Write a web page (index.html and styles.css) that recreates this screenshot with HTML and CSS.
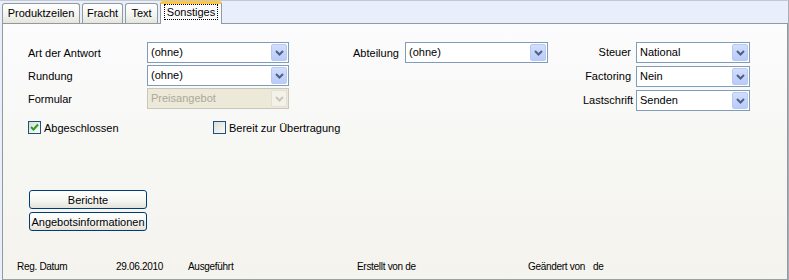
FILE: index.html
```html
<!DOCTYPE html>
<html lang="de">
<head>
  <meta charset="UTF-8">
  <title>Angebot - Sonstiges</title>
  <link rel="stylesheet" href="styles.css">
</head>
<body>

<div class="window">

  <!-- Tab strip -->
  <div class="tabs">
    <div class="tab tab-w1">Produktzeilen</div>
    <div class="tab tab-w2">Fracht</div>
    <div class="tab tab-w3">Text</div>
    <div class="tab tab-active"><span class="focus">Sonstiges</span></div>
  </div>

  <!-- Tab page -->
  <div class="panel">

    <div class="fields">
      <div class="group group-left">
        <label>Art der Antwort</label>
        <div class="combo"><span>(ohne)</span><i class="drop"><svg width="9" height="6" viewBox="0 0 9 6"><polyline points="1,1 4.5,4.5 8,1"/></svg></i></div>
        <label>Rundung</label>
        <div class="combo"><span>(ohne)</span><i class="drop"><svg width="9" height="6" viewBox="0 0 9 6"><polyline points="1,1 4.5,4.5 8,1"/></svg></i></div>
        <label>Formular</label>
        <div class="combo disabled"><span>Preisangebot</span><i class="drop"><svg width="9" height="6" viewBox="0 0 9 6"><polyline points="1,1 4.5,4.5 8,1"/></svg></i></div>
      </div>

      <div class="group group-mid">
        <label>Abteilung</label>
        <div class="combo"><span>(ohne)</span><i class="drop"><svg width="9" height="6" viewBox="0 0 9 6"><polyline points="1,1 4.5,4.5 8,1"/></svg></i></div>
      </div>

      <div class="group group-right">
        <label>Steuer</label>
        <div class="combo"><span>National</span><i class="drop"><svg width="9" height="6" viewBox="0 0 9 6"><polyline points="1,1 4.5,4.5 8,1"/></svg></i></div>
        <label>Factoring</label>
        <div class="combo"><span>Nein</span><i class="drop"><svg width="9" height="6" viewBox="0 0 9 6"><polyline points="1,1 4.5,4.5 8,1"/></svg></i></div>
        <label>Lastschrift</label>
        <div class="combo"><span>Senden</span><i class="drop"><svg width="9" height="6" viewBox="0 0 9 6"><polyline points="1,1 4.5,4.5 8,1"/></svg></i></div>
      </div>
    </div>

    <div class="checks">
      <div class="check check-first">
        <span class="box"><svg width="11" height="11" viewBox="0 0 11 11"><polyline points="2,5 4.5,7.5 9,2.5"/></svg></span>
        Abgeschlossen
      </div>
      <div class="check">
        <span class="box"></span>
        Bereit zur Übertragung
      </div>
    </div>

    <div class="buttons">
      <button>Berichte</button>
      <button>Angebotsinformationen</button>
    </div>

    <div class="status">
      <span>Reg. Datum</span>
      <span>29.06.2010</span>
      <span>Ausgeführt</span>
      <span>Erstellt von de</span>
      <span>Geändert von</span>
      <span>de</span>
    </div>

  </div>
</div>

</body>
</html>
```

FILE: styles.css
```css
* {
  box-sizing: border-box;
  padding: 0;
  margin: 0;
}

body {
  font-family: "Liberation Sans", Arial, sans-serif;
  font-size: 11px;
  color: #000;
  background: #e8eefc;
}

.window {
  width: 789px;
  height: 280px;
  background: #e8eefc;
  border-top: 1px solid #c3c8d3;
  border-right: 1px solid #a9aeb6;
  overflow: hidden;
}

/* Tabs */
.tabs {
  display: flex;
  align-items: flex-end;
  gap: 2px;
  height: 22px;
  padding-left: 2px;
}

.tab {
  height: 20px;
  line-height: 18px;
  text-align: center;
  border: 1px solid #919b9c;
  border-bottom: none;
  border-radius: 3px 3px 0 0;
  background: linear-gradient(#ffffff, #f3f3ef 60%, #e5e4dc);
}

.tab-w1 { width: 78px; }
.tab-w2 { width: 41px; }
.tab-w3 { width: 33px; }

.tab-active {
  width: 62px;
  height: 23px;
  margin-bottom: -1px;
  position: relative;
  z-index: 1;
  background: #fcfcfe;
  border-top: 3px solid #ffc83c;
  border-radius: 3px 3px 0 0;
  line-height: 16px;
}

.focus {
  display: inline-block;
  padding: 0 2px;
  border: 1px dotted #000;
  line-height: 14px;
}

/* Tab page */
.panel {
  margin-left: 2px;
  width: 786px;
  height: 257px;
  border: 1px solid #919b9c;
  border-bottom-color: #9aa2a4;
  background: linear-gradient(#fcfcfe, #f7f7f4 45%, #f4f3ee);
  padding: 18px 0 0 25px;
}

.fields {
  display: flex;
  align-items: flex-start;
}

.group {
  display: grid;
  grid-auto-rows: 21px;
  align-items: center;
  white-space: nowrap;
}

.group-left {
  grid-template-columns: 119px 142px;
  row-gap: 2px;
}

.group-mid {
  margin-left: 64px;
  grid-template-columns: 52px 143px;
}

.group-right {
  margin-left: 35px;
  grid-template-columns: 53px 114px;
  row-gap: 3px;
}

.group-right label {
  text-align: right;
  padding-right: 5px;
  padding-bottom: 2px;
}

/* Combo box */
.combo {
  position: relative;
  height: 21px;
  line-height: 19px;
  padding-left: 3px;
  background: #fff;
  border: 1px solid #7f9db9;
}

.drop {
  position: absolute;
  top: 1px;
  right: 1px;
  width: 16px;
  height: 17px;
  border: 1px solid #b8c9f3;
  border-radius: 2px;
  background: linear-gradient(#d2defc, #b9cbf8);
  display: flex;
  align-items: center;
  justify-content: center;
}

.drop svg polyline {
  fill: none;
  stroke: #4d6185;
  stroke-width: 2;
}

.combo.disabled {
  background: #ece9d8;
  border-color: #c9c7ba;
  color: #aca899;
}

.combo.disabled .drop {
  background: #f2f1ea;
  border-color: #e2e0d6;
}

.combo.disabled .drop svg polyline {
  stroke: #c9c7ba;
}

/* Checkboxes */
.checks {
  display: flex;
  margin-top: 10px;
  white-space: nowrap;
}

.check {
  display: flex;
  align-items: center;
  gap: 3px;
  height: 13px;
}

.check-first {
  width: 185px;
}

.box {
  width: 13px;
  height: 13px;
  border: 1px solid #1c5180;
  background: linear-gradient(135deg, #dcdcd7, #fbfbf9);
  display: flex;
  align-items: center;
  justify-content: center;
}

.box svg polyline {
  fill: none;
  stroke: #21a121;
  stroke-width: 2;
}

/* Buttons */
.buttons {
  display: flex;
  flex-direction: column;
  gap: 3px;
  margin-top: 56px;
  margin-left: 1px;
}

button {
  width: 118px;
  height: 19px;
  font-family: "Liberation Sans", Arial, sans-serif;
  font-size: 11px;
  color: #000;
  border: 1px solid #003c74;
  border-radius: 3px;
  background: linear-gradient(#ffffff, #f4f4f0 60%, #e3e2da);
}

/* Status line */
.status {
  display: grid;
  grid-template-columns: 99px 72px 169px 171px 65px auto;
  margin-top: 29px;
  margin-left: -11px;
  line-height: 13px;
  font-size: 10px;
  letter-spacing: -0.3px;
  white-space: nowrap;
}
```
